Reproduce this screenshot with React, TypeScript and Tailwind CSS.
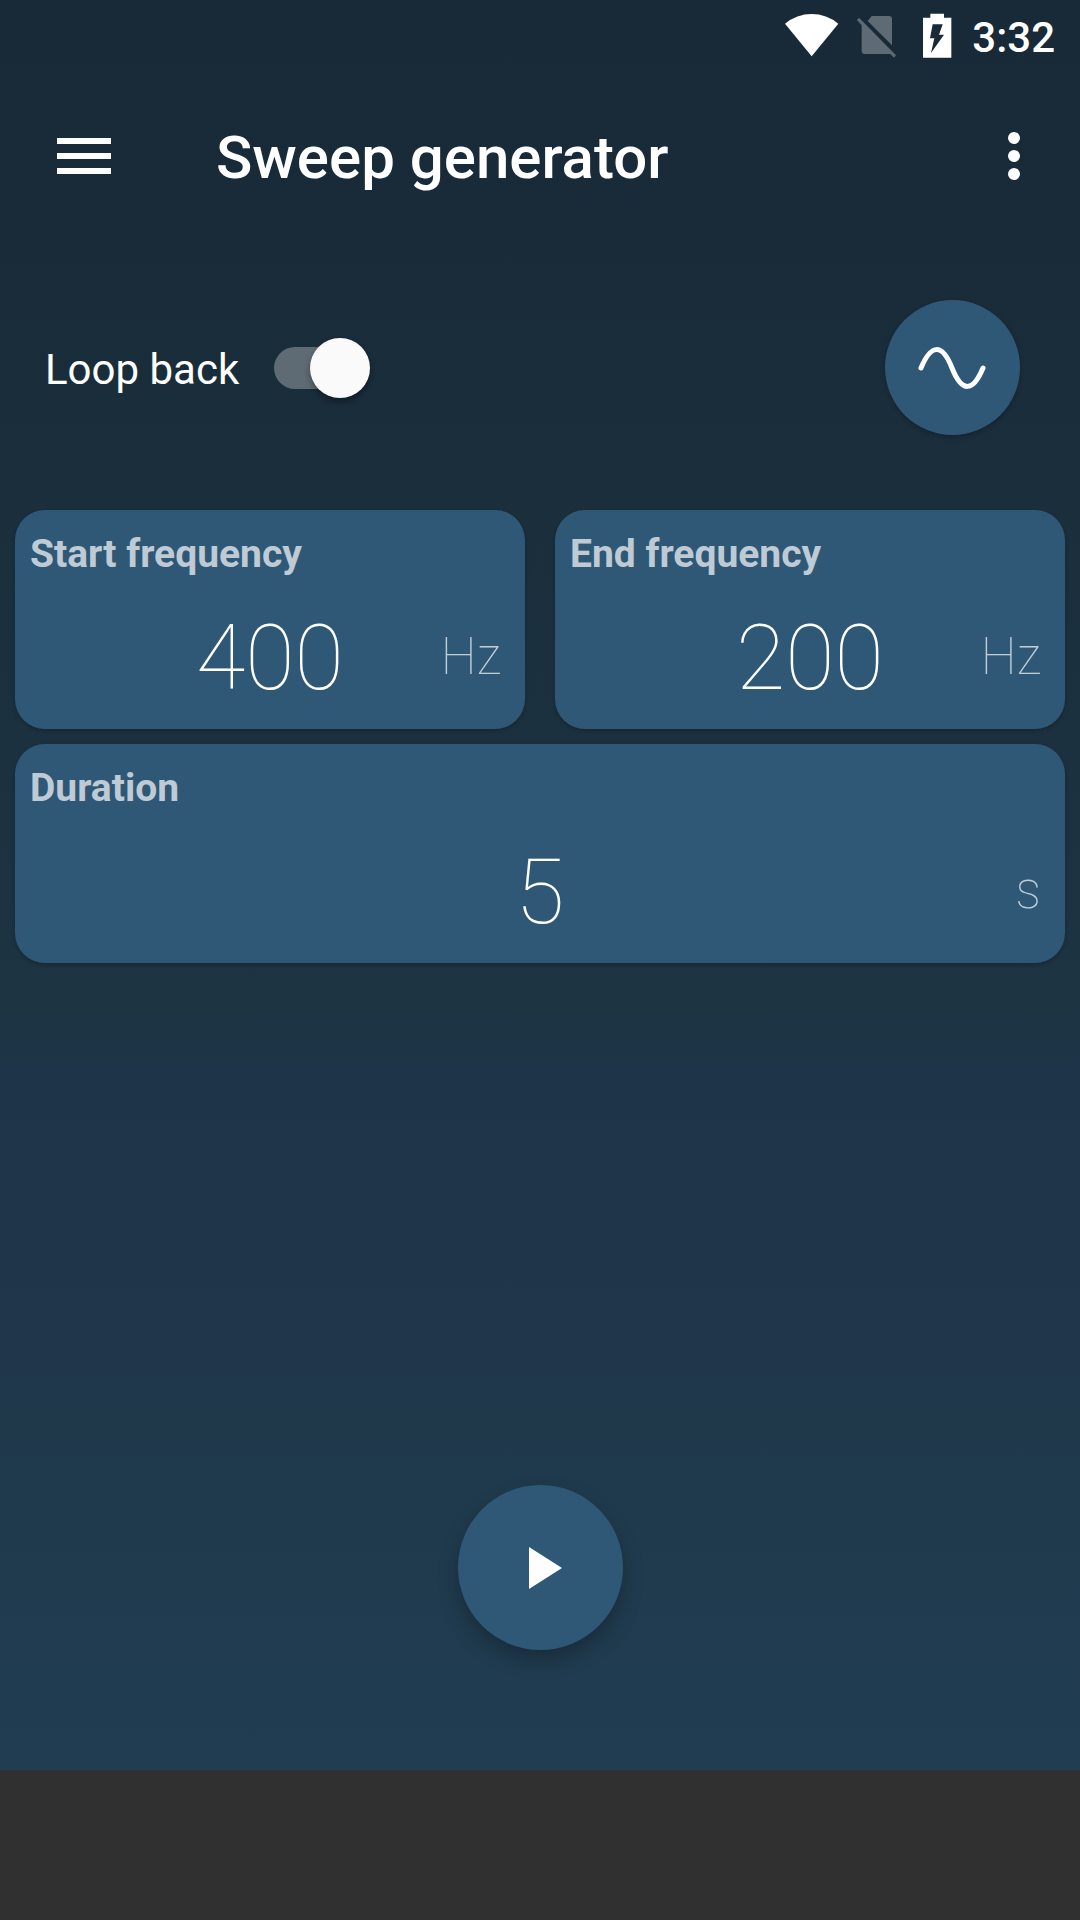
import { useState } from "react";

function WifiIcon() {
  return (
    <svg className="h-[46px] w-[54px]" viewBox="75 40 162 138" fill="#fff" aria-hidden="true">
      <path d="M75 72A125 125 0 0 1 235 72L155 170Z" />
    </svg>
  );
}

function NoSimIcon() {
  return (
    <svg className="h-[46px] w-[48px]" viewBox="291 40 144 138" fill="#5e6b74" aria-hidden="true">
      <path d="M335 49H387Q396 49 396 58V137L323 64Z" />
      <path d="M291 61L297 54L408 167L402 174L391 163H314Q305 163 305 154V77Z" />
    </svg>
  );
}

function BatteryIcon() {
  return (
    <svg className="h-[46px] w-[31px]" viewBox="489 40 93 138" fill="#fff" aria-hidden="true">
      <path
        fillRule="evenodd"
        d="M511 42H552V54H574V174H489V54H511ZM518 74L510 116H523L513 160L552 105H537L548 74Z"
      />
    </svg>
  );
}

type FieldProps = {
  id: string;
  label: string;
  unit: string;
  initial: string;
  className?: string;
};

function Field({ id, label, unit, initial, className = "" }: FieldProps) {
  const [value, setValue] = useState(initial);
  return (
    <div
      className={`flex flex-col rounded-[30px] bg-[#2f5877] px-[15px] pt-[21px] pb-[18px] shadow-[0_2px_4px_rgba(0,0,0,0.22)] ${className}`}
    >
      <label htmlFor={id} className="text-[39px] leading-[46px] font-bold text-white/70">
        {label}
      </label>
      <div className="mt-[29px] grid grid-cols-1 items-center">
        <input
          id={id}
          inputMode="numeric"
          value={value}
          onChange={(e) => setValue(e.target.value)}
          className="col-start-1 row-start-1 h-[105px] w-full min-w-0 bg-transparent text-center text-[90px] leading-[105px] font-thin text-white outline-none"
        />
        <span className="pointer-events-none col-start-1 row-start-1 mr-[9px] justify-self-end pb-1 text-[51px] leading-[60px] font-thin text-white/70">
          {unit}
        </span>
      </div>
    </div>
  );
}

export default function App() {
  const [loop, setLoop] = useState(true);
  return (
    <div className="flex min-h-screen flex-col bg-[#303030] font-['Roboto',sans-serif] text-white">
      <div className="flex flex-1 flex-col bg-[linear-gradient(to_bottom,#182a37_0%,#192b38_12%,#1d3443_57%,#1e3449_61%,#20364b_76%,#1f394b_80%,#213d52_100%)]">
        <div className="flex h-[72px] items-center justify-end gap-[18px] pr-[25px]">
          <WifiIcon />
          <NoSimIcon />
          <BatteryIcon />
          <span className="pt-1 text-[42px] leading-[50px] font-medium">3:32</span>
        </div>

        <header className="flex h-[168px] items-center pr-[42px] pl-[48px]">
          <button type="button" aria-label="Open menu" className="flex h-[72px] w-[72px] items-center justify-center">
            <svg className="h-[36px] w-[54px]" viewBox="0 0 54 36" fill="#fff" aria-hidden="true">
              <path d="M0 0H54V6H0ZM0 15H54V21H0ZM0 30H54V36H0Z" />
            </svg>
          </button>
          <h1 className="ml-24 flex-1 pt-1 text-[60px] leading-[72px] font-medium">Sweep generator</h1>
          <button type="button" aria-label="More options" className="flex h-[72px] w-[48px] items-center justify-center">
            <svg className="h-[48px] w-[12px]" viewBox="0 0 12 48" fill="#fff" aria-hidden="true">
              <circle cx="6" cy="6" r="6" />
              <circle cx="6" cy="24" r="6" />
              <circle cx="6" cy="42" r="6" />
            </svg>
          </button>
        </header>

        <section className="flex items-center justify-between pt-[60px] pr-[60px] pb-[75px] pl-[45px]">
          <div className="flex items-center gap-[35px]">
            <label htmlFor="loop" className="pt-1 text-[42px] leading-[50px]">
              Loop back
            </label>
            <span className="relative flex h-[60px] w-[96px] items-center">
              <input
                id="loop"
                type="checkbox"
                role="switch"
                checked={loop}
                onChange={(e) => setLoop(e.target.checked)}
                className="peer h-[42px] w-[87px] appearance-none rounded-full bg-[#5e6b74]"
              />
              <span className="pointer-events-none absolute left-0 h-[60px] w-[60px] rounded-full bg-[#fafafa] shadow-[0_4px_6px_rgba(0,0,0,0.35)] peer-checked:right-0 peer-checked:left-auto" />
            </span>
          </div>
          <button
            type="button"
            aria-label="Waveform: sine"
            className="flex h-[135px] w-[135px] items-center justify-center rounded-full bg-[#2f5877] shadow-[0_2px_5px_rgba(0,0,0,0.22)]"
          >
            <svg
              className="h-[48px] w-[72px]"
              viewBox="0 0 72 48"
              fill="none"
              stroke="#fff"
              strokeWidth="5"
              strokeLinecap="round"
              aria-hidden="true"
            >
              <path d="M4 24C14 0 25 -1 35 24S56 48 66 24" />
            </svg>
          </button>
        </section>

        <section className="grid grid-cols-2 gap-x-[30px] gap-y-[15px] px-[15px]">
          <Field id="start" label="Start frequency" unit="Hz" initial="400" />
          <Field id="end" label="End frequency" unit="Hz" initial="200" />
          <Field id="duration" label="Duration" unit="s" initial="5" className="col-span-2" />
        </section>

        <div className="flex flex-1 items-end justify-center pt-[60px] pb-[120px]">
          <button
            type="button"
            aria-label="Play"
            className="flex h-[165px] w-[165px] items-center justify-center rounded-full bg-[#2f5877] shadow-[0_10px_20px_rgba(0,0,0,0.25)]"
          >
            <svg className="h-[72px] w-[72px]" viewBox="0 0 72 72" fill="#fff" aria-hidden="true">
              <path d="M25 15v42l33-21z" />
            </svg>
          </button>
        </div>
      </div>
      <footer className="h-[150px] bg-[#303030]" />
    </div>
  );
}
